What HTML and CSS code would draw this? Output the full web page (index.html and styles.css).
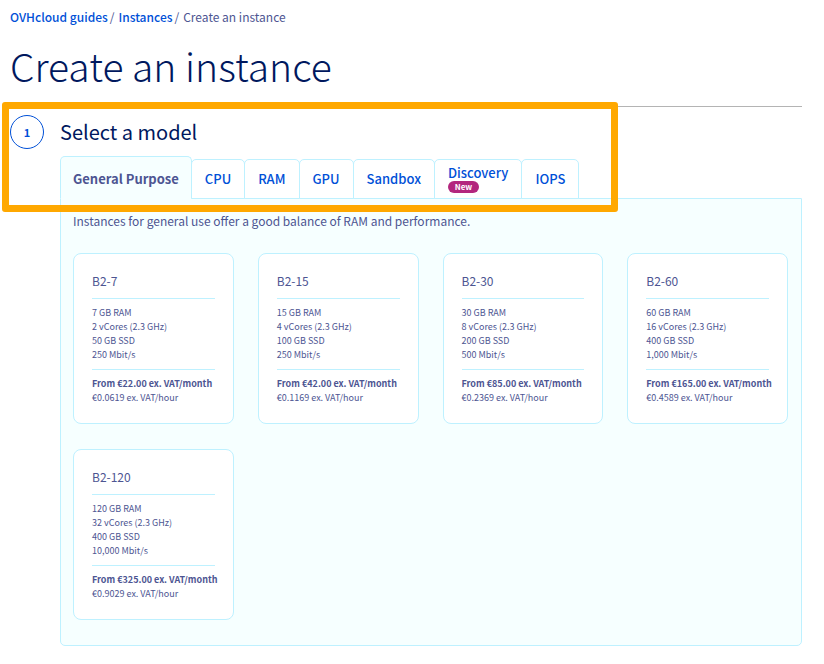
FILE: index.html
```
<!DOCTYPE html>
<html lang="en">
<head>
<meta charset="utf-8">
<meta name="viewport" content="width=device-width, initial-scale=1">
<title>Create an instance</title>
<link rel="stylesheet" href="styles.css">
</head>
<body>
<nav class="breadcrumb" aria-label="Breadcrumb">
  <a href="#">OVHcloud guides</a><span class="sep">/</span><a href="#">Instances</a><span class="sep">/</span><span>Create an instance</span>
</nav>
<main>
  <h1>Create an instance</h1>
  <section class="step">
    <div class="step-head">
      <span class="step-number">1</span>
      <h2>Select a model</h2>
    </div>
    <div class="highlight" aria-hidden="true"></div>
    <div class="models">
      <div class="tabs" role="tablist">
        <button class="tab active" type="button" role="tab" aria-selected="true">General Purpose</button>
        <button class="tab" type="button" role="tab">CPU</button>
        <button class="tab" type="button" role="tab">RAM</button>
        <button class="tab" type="button" role="tab">GPU</button>
        <button class="tab" type="button" role="tab">Sandbox</button>
        <button class="tab" type="button" role="tab"><span class="tab-name">Discovery</span><span class="badge">New</span></button>
        <button class="tab" type="button" role="tab">IOPS</button>
      </div>
      <div class="panel" role="tabpanel">
        <p class="intro">Instances for general use offer a good balance of RAM and performance.</p>
        <div class="cards">
          <article class="card">
            <h3>B2-7</h3>
            <ul><li>7 GB RAM</li><li>2 vCores (2.3 GHz)</li><li>50 GB SSD</li><li>250 Mbit/s</li></ul>
            <p class="price"><strong>From €22.00 ex. VAT/month</strong><span>€0.0619 ex. VAT/hour</span></p>
          </article>
          <article class="card">
            <h3>B2-15</h3>
            <ul><li>15 GB RAM</li><li>4 vCores (2.3 GHz)</li><li>100 GB SSD</li><li>250 Mbit/s</li></ul>
            <p class="price"><strong>From €42.00 ex. VAT/month</strong><span>€0.1169 ex. VAT/hour</span></p>
          </article>
          <article class="card">
            <h3>B2-30</h3>
            <ul><li>30 GB RAM</li><li>8 vCores (2.3 GHz)</li><li>200 GB SSD</li><li>500 Mbit/s</li></ul>
            <p class="price"><strong>From €85.00 ex. VAT/month</strong><span>€0.2369 ex. VAT/hour</span></p>
          </article>
          <article class="card">
            <h3>B2-60</h3>
            <ul><li>60 GB RAM</li><li>16 vCores (2.3 GHz)</li><li>400 GB SSD</li><li>1,000 Mbit/s</li></ul>
            <p class="price"><strong>From €165.00 ex. VAT/month</strong><span>€0.4589 ex. VAT/hour</span></p>
          </article>
          <article class="card">
            <h3>B2-120</h3>
            <ul><li>120 GB RAM</li><li>32 vCores (2.3 GHz)</li><li>400 GB SSD</li><li>10,000 Mbit/s</li></ul>
            <p class="price"><strong>From €325.00 ex. VAT/month</strong><span>€0.9029 ex. VAT/hour</span></p>
          </article>
        </div>
      </div>
    </div>
  </section>
</main>
</body>
</html>
```
FILE: styles.css
```
* { box-sizing: border-box; }
body {
  margin: 0;
  padding: 8px 22px 18px 10px;
  background: #fff;
  color: #4d5592;
  font-family: "Noto Sans CJK SC", "Noto Sans", sans-serif;
  font-size: 12px;
  line-height: 18px;
}
h1, h2, h3, p, ul { margin: 0; padding: 0; font-weight: 400; }
ul { list-style: none; }
.breadcrumb { display: flex; }
.breadcrumb a { color: #0050d7; font-weight: 500; text-decoration: none; }
.sep { margin: 0 4px 0 2px; }
h1 {
  padding: 14px 0 16px;
  border-bottom: 1px solid #b4b4b4;
  color: #00185e;
  font-size: 39px;
  font-weight: 300;
  line-height: 50px;
}
.step { position: relative; }
.step-head { display: flex; align-items: center; gap: 16px; padding-top: 8px; }
.step-number {
  display: grid;
  place-items: center;
  width: 34px;
  height: 34px;
  border: 1px solid #0050d7;
  border-radius: 50%;
  color: #0050d7;
  font-size: 11px;
  font-weight: 700;
}
h2 { color: #00185e; font-size: 20px; line-height: 34px; }
.highlight {
  position: absolute;
  z-index: 2;
  top: -5px;
  left: -8px;
  width: 616px;
  height: 110px;
  border: 7px solid #ffa800;
  border-radius: 3px;
}
.models { margin-left: 50px; padding-top: 7px; }
.tabs { display: flex; align-items: flex-end; position: relative; z-index: 1; margin-bottom: -1px; }
.tab {
  height: 40px;
  margin: 0 0 0 -1px;
  padding: 0 13px;
  border: 1px solid #bef1ff;
  border-radius: 5px 5px 0 0;
  background: #fff;
  color: #0050d7;
  font: inherit;
  font-size: 13px;
  font-weight: 500;
  line-height: 16px;
}
.tab.active {
  height: 43px;
  margin-left: 0;
  padding: 3px 12px 0;
  border-bottom-color: #f6ffff;
  background: #f6ffff;
  color: #4d5592;
  font-weight: 700;
}
.tab-name { display: block; }
.badge {
  display: block;
  width: 31px;
  border-radius: 6px;
  background: #b3277e;
  color: #fff;
  font-size: 8px;
  font-weight: 700;
  line-height: 12px;
  text-align: center;
}
.panel {
  padding: 13px 13px 25px 12px;
  border: 1px solid #bef1ff;
  border-radius: 0 0 5px 5px;
  background: #f6ffff;
}
.cards {
  display: grid;
  grid-template-columns: repeat(4, minmax(0, 1fr));
  gap: 25px 24px;
  margin-top: 23px;
}
.card {
  padding: 18px;
  border: 1px solid #bef1ff;
  border-radius: 8px;
  background: #fff;
  font-size: 9px;
  line-height: 14px;
  white-space: nowrap;
}
.card h3 { padding-bottom: 8px; font-size: 12px; line-height: 18px; }
.card ul { border-top: 1px solid #bef1ff; padding: 7px 0; }
.price { border-top: 1px solid #bef1ff; padding-top: 7px; }
.price strong, .price span { display: block; }
```
